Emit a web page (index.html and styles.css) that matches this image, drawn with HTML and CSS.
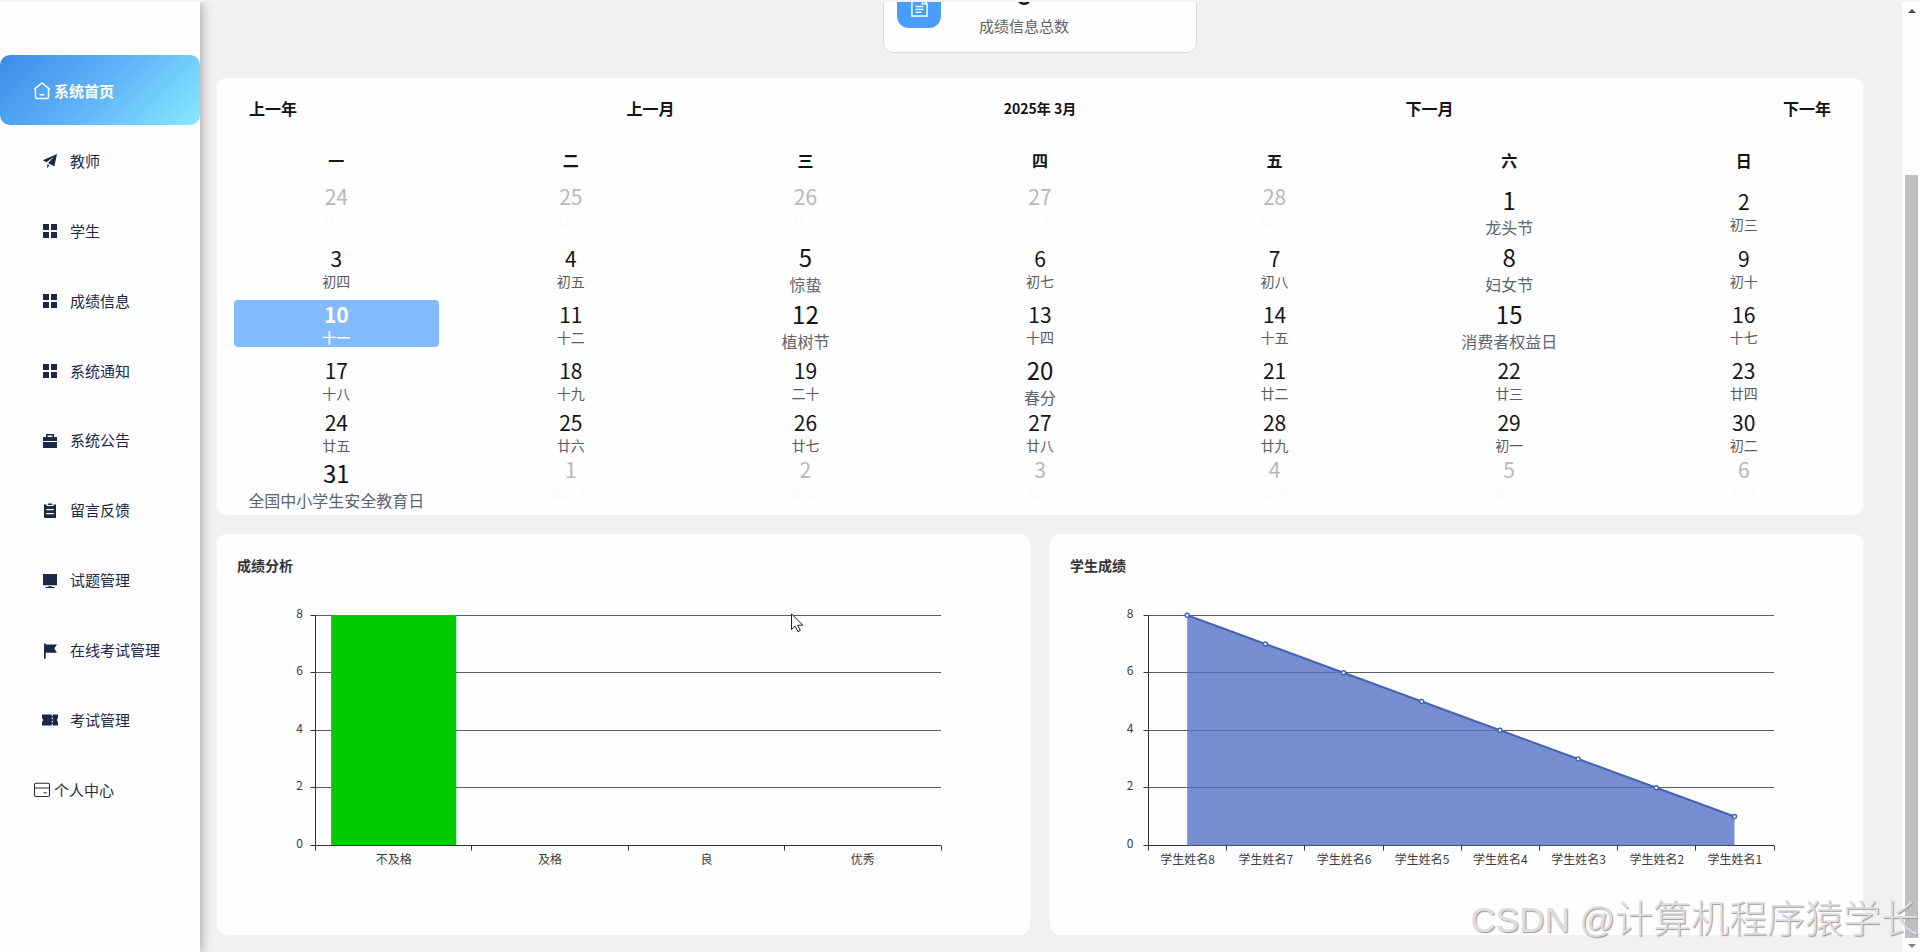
FILE: index.html
```html
<!DOCTYPE html>
<html lang="zh-CN">
<head>
  <meta charset="UTF-8" />
  <meta name="viewport" content="width=device-width, initial-scale=1.0" />
  <title>系统首页</title>
  <link rel="stylesheet" href="styles.css">
</head>
<body>
  <aside class="sidebar">
    <a class="item root active">
      <svg class="icon" viewBox="0 0 17 18"><path d="M.6 7.3 8.500 1 16.400 7.300M2 6.200V15.300q0 1.200 1.200 1.200H13.800q1.200 0 1.200-1.200V6.200M6 12.300q2.500 1.200 5 0" fill="none" stroke="currentColor" stroke-width="1.500"/></svg>
      <span>系统首页</span>
    </a>
    <a class="item">
      <svg class="icon" viewBox="0 0 16 16"><path d="M15 1 .8 7.2 4.5 9.2 12 3.6 6 10.2 12.4 13.2ZM5.2 11.2V15.2L7.6 12.3Z"/></svg>
      <span>教师</span>
    </a>
    <a class="item">
      <svg class="icon" viewBox="0 0 16 16"><path d="M1 1h6v6H1zM9 1h6v6H9zM1 9h6v6H1zM9 9h6v6H9z"/></svg>
      <span>学生</span>
    </a>
    <a class="item">
      <svg class="icon" viewBox="0 0 16 16"><path d="M1 1h6v6H1zM9 1h6v6H9zM1 9h6v6H1zM9 9h6v6H9z"/></svg>
      <span>成绩信息</span>
    </a>
    <a class="item">
      <svg class="icon" viewBox="0 0 16 16"><path d="M1 1h6v6H1zM9 1h6v6H9zM1 9h6v6H1zM9 9h6v6H9z"/></svg>
      <span>系统通知</span>
    </a>
    <a class="item">
      <svg class="icon" viewBox="0 0 16 16"><path d="M4 4V1h8v3h3v4H1V4zM5.6 4h4.8V2.4H5.6zM1 9h14v6H1z" fill-rule="evenodd"/></svg>
      <span>系统公告</span>
    </a>
    <a class="item">
      <svg class="icon" viewBox="0 0 16 16"><path d="M2 1.5h2.5V3h7V1.5H14V15H2zM5.8.5h4.4V2H5.8zM4.2 6v1.3h7.6V6zM4.2 10v1.3h7.6V10z" fill-rule="evenodd"/></svg>
      <span>留言反馈</span>
    </a>
    <a class="item">
      <svg class="icon" viewBox="0 0 16 16"><path d="M1 1h14v11.200H1zM6.500 13.200h3l.5.8h2.500v1h-9v-1H6z"/></svg>
      <span>试题管理</span>
    </a>
    <a class="item">
      <svg class="icon" viewBox="0 0 16 16"><path d="M2 .5h1.7V1.5H15L12.3 5.5 15 9.8H3.7V15.8H2z"/></svg>
      <span>在线考试管理</span>
    </a>
    <a class="item">
      <svg class="icon" viewBox="0 0 16 16"><path d="M0 2.5h9.8v1.4h1V2.5H16V6q-2 2 0 4v3.500h-5.200v-1.400h-1v1.400H0V10q2-2 0-4zM9.800 5.500v1.800h1V5.500zM9.800 8.800v1.800h1V8.800z" fill-rule="evenodd"/></svg>
      <span>考试管理</span>
    </a>
    <a class="item root">
      <svg class="icon" viewBox="0 0 17 18"><path d="M2.600 2.300h11.800q1.600 0 1.600 1.600v10q0 1.600-1.600 1.600H2.600Q1 15.500 1 13.900v-10Q1 2.300 2.600 2.300ZM1 7h15M10 11.700h3.300" fill="none" stroke="currentColor" stroke-width="1.100"/></svg>
      <span>个人中心</span>
    </a>
  </aside>

  <main class="main">
    <section class="stat">
      <div class="stat-icon">
        <svg viewBox="0 0 18 20"><path d="M1 1h11l5 5v13H1zM12 1v5h5M5 9h8M5 12h8M5 15h6" fill="none" stroke="#fff" stroke-width="1.500"/></svg>
      </div>
      <div class="stat-info">
        <div class="stat-num">8</div>
        <div class="stat-name">成绩信息总数</div>
      </div>
    </section>

    <section class="card calendar">
      <div class="cal-head">
        <span>上一年</span>
        <span>上一月</span>
        <span class="cal-title">2025年 3月</span>
        <span>下一月</span>
        <span>下一年</span>
      </div>
      <div class="cal-week">
        <span>一</span><span>二</span><span>三</span><span>四</span><span>五</span><span>六</span><span>日</span>
      </div>
      <div class="cal-days" id="days"></div>
    </section>

    <div class="charts">
      <section class="card chart">
        <h3>成绩分析</h3>
        <svg id="bar" width="813" height="360"></svg>
      </section>
      <section class="card chart">
        <h3>学生成绩</h3>
        <svg id="line" width="813" height="360"></svg>
      </section>
    </div>
  </main>

  <div class="scrollbar">
    <i class="arrow up"></i>
    <div class="thumb"></div>
    <i class="arrow down"></i>
  </div>

  <div class="watermark"><span>CSDN @</span>计算机程序猿学长</div>
  <svg class="cursor" viewBox="0 0 13 20"><path d="M.5.8V16.500L4.200 13.200 7 18.700 9.300 17.600 6.700 12.200H11.800Z" fill="#fff" stroke="#222"/></svg>

  <script>
    // 日期，农历/节日，类型：o 非本月，f 节日，t 今天
    const days = [
      [24, "廿七", "o"], [25, "廿八", "o"], [26, "廿九", "o"], [27, "三十", "o"], [28, "初一", "o"], [1, "龙头节", "f"], [2, "初三"],
      [3, "初四"], [4, "初五"], [5, "惊蛰", "f"], [6, "初七"], [7, "初八"], [8, "妇女节", "f"], [9, "初十"],
      [10, "十一", "t"], [11, "十二"], [12, "植树节", "f"], [13, "十四"], [14, "十五"], [15, "消费者权益日", "f"], [16, "十七"],
      [17, "十八"], [18, "十九"], [19, "二十"], [20, "春分", "f"], [21, "廿二"], [22, "廿三"], [23, "廿四"],
      [24, "廿五"], [25, "廿六"], [26, "廿七"], [27, "廿八"], [28, "廿九"], [29, "初一"], [30, "初二"],
      [31, "全国中小学生安全教育日", "f"], [1, "愚人节", "o"], [2, "初五", "o"], [3, "初六", "o"], [4, "清明", "o"], [5, "初八", "o"], [6, "初九", "o"]
    ];
    const types = { o: "other", f: "festival", t: "today" };
    document.getElementById("days").innerHTML = days.map(([n, text, t]) =>
      `<div class="day ${types[t] || ""}"><b>${n}</b><span>${text}</span></div>`
    ).join("");

    // 坐标系
    const left = 98.5, right = 724, top0 = 41.5, bottom = 271.5;
    const yOf = v => bottom - (bottom - top0) * v / 8;

    function drawAxis(names, labelGap) {
      let s = "";
      for (let v = 0; v <= 8; v += 2) {
        const y = Math.ceil(yOf(v)) - 0.5;
        if (v > 0) s += `<path class="split" d="M${left} ${y}H${right}"/>`;
        s += `<path class="axis" d="M${left - 5} ${y}H${left}"/>`;
        s += `<text x="${left - labelGap}" y="${y + 2.5}" text-anchor="end">${v}</text>`;
      }
      const step = (right - left) / names.length;
      for (let i = 0; i <= names.length; i++) {
        const x = Math.floor(left + step * i) + 0.5;
        s += `<path class="axis" d="M${x} ${bottom}V${bottom + 5}"/>`;
        if (i < names.length) s += `<text x="${left + step * (i + 0.5)}" y="${bottom + 18.5}" text-anchor="middle">${names[i]}</text>`;
      }
      return { s, step, frame: `<path class="axis" d="M${left} ${top0}V${bottom}H${right}"/>` };
    }

    const bar = drawAxis(["不及格", "及格", "良", "优秀"], 12.5);
    document.getElementById("bar").innerHTML = bar.s +
      `<rect x="${left + bar.step * 0.1}" y="${yOf(8) - 0.5}" width="${bar.step * 0.8}" height="${bottom - top0}" fill="#00cb00"/>` + bar.frame;

    const scores = [8, 7, 6, 5, 4, 3, 2, 1];
    const line = drawAxis(scores.map(v => "学生姓名" + v), 15);
    const pts = scores.map((v, i) => [left + line.step * (i + 0.5) - 0.4, yOf(v) - 0.3]);
    document.getElementById("line").innerHTML = line.s + line.frame +
      `<polygon class="area" points="${pts[0][0]},${bottom} ${pts.join(" ")} ${pts[7][0]},${bottom}"/>` +
      `<polyline class="trend" points="${pts.join(" ")}"/>` +
      pts.map(p => `<circle class="dot" cx="${p[0]}" cy="${p[1]}" r="2"/>`).join("");
  </script>
</body>
</html>
```
FILE: styles.css
```css
* {
  box-sizing: border-box;
}

body {
  margin: 0;
  height: 952px;
  display: flex;
  overflow: hidden;
  background: #f1f0f2;
  border-top: 2px solid #f3f2f4;
  font-family: "Noto Sans CJK SC", sans-serif;
  color: #141414;
}

.sidebar {
  width: 200px;
  flex-shrink: 0;
  padding-top: 53px;
  background: #fefdff;
  box-shadow: 0 0 12px rgba(0, 0, 0, 0.4);
}

.item {
  display: flex;
  align-items: center;
  height: 69.9px;
  padding: 3px 0 0 42px;
  gap: 12px;
  font-size: 15px;
  color: #1d2748;
}

.item span {
  margin-top: -2px;
}

.item .icon {
  width: 16px;
  height: 16px;
  fill: currentColor;
}

.item.root {
  padding-left: 33px;
  gap: 3px;
  color: #2c2f3a;
}

.item.root .icon {
  width: 18px;
  height: 18px;
}

.item.active,
.item.root.active {
  color: #fff;
  font-weight: bold;
  border-radius: 10px;
  background: linear-gradient(135deg, #3a8bea, #5fb4f8 50%, #8ae9ff);
}

.main {
  width: 1646px;
  margin-left: 17px;
  display: flex;
  flex-direction: column;
}

.card {
  background: #fefdff;
  border-radius: 10px;
}

.stat {
  width: 314px;
  height: 100px;
  flex-shrink: 0;
  margin: -49px auto 25px;
  display: flex;
  align-items: center;
  padding: 0 13px;
  background: #fefdff;
  border: 1px solid #dcdbde;
  border-radius: 10px;
}

.stat-icon {
  width: 44px;
  height: 44px;
  margin-top: 6px;
  display: flex;
  align-items: center;
  justify-content: center;
  background: #4a9dfb;
  border-radius: 12px;
}

.stat-icon svg {
  width: 17px;
  height: 19px;
  margin-top: 2px;
}

.stat-info {
  margin-left: 38px;
  padding-top: 9px;
  text-align: center;
}

.stat-num {
  font-size: 24px;
  font-weight: bold;
  line-height: 32px;
  margin-bottom: 4px;
}

.stat-name {
  font-size: 15px;
  line-height: 22px;
  color: #606266;
}

.calendar {
  height: 437px;
  flex-shrink: 0;
  padding: 0 2px;
  overflow: hidden;
}

.cal-head {
  height: 61px;
  padding: 0 30px 2px;
  display: flex;
  justify-content: space-between;
  align-items: center;
  font-weight: bold;
}

.cal-title {
  font-size: 14px;
}

.cal-week {
  height: 42px;
  display: grid;
  grid-template-columns: repeat(7, 1fr);
  text-align: center;
  line-height: 43px;
  font-weight: bold;
}

.cal-days {
  display: grid;
  grid-template-columns: repeat(7, 1fr);
  grid-template-rows: 57px 56.5px 56px 56px 47.5px 60px;
}

.day {
  align-self: center;
  height: 47px;
  margin: 0 15px;
  display: flex;
  flex-direction: column;
  align-items: center;
  border-radius: 4px;
  white-space: nowrap;
}

.day b {
  font-size: 21px;
  font-weight: normal;
  line-height: 30px;
}

.day span {
  font-size: 14px;
  line-height: 17px;
  color: #5b5b5e;
}

.day.other {
  align-self: start;
}

.day.other b {
  color: #b8b7ba;
}

.day.other span {
  color: #fbfafc;
}

.day.festival {
  align-self: start;
  margin-top: 3px;
}

.day.festival b {
  font-size: 24px;
  line-height: 32px;
}

.day.festival span {
  font-size: 16px;
  line-height: 23px;
  color: #5c6470;
}

.day.today {
  position: relative;
  background: #83bafe;
  height: 47px;
  margin-top: 1px;
}

.day.today b,
.day.today span {
  margin-top: -1px;
  color: #fff;
  font-weight: bold;
}

.day.today span {
  margin-top: 0;
  font-weight: 500;
}

.charts {
  display: flex;
  gap: 20px;
  margin-top: 19px;
}

.chart {
  width: 813px;
  height: 401px;
}

.chart h3 {
  margin: 0 0 -1px;
  padding: 21px 20px 0;
  font-size: 14px;
  line-height: 20px;
  color: #333;
}

.chart svg {
  display: block;
}

.chart text {
  font-size: 12px;
  fill: #3c3c40;
}

.split {
  stroke: #5d5c62;
}

.axis {
  fill: none;
  stroke: #333238;
}

.area {
  fill: #5470c6;
  opacity: 0.8;
}

.trend {
  fill: none;
  stroke: #4563b5;
  stroke-width: 2;
}

.dot {
  fill: #fff;
  stroke: #4563b5;
  stroke-width: 1.5;
}

.scrollbar {
  width: 18px;
  margin-left: auto;
  padding: 7px 2px 4px 3px;
  display: flex;
  flex-direction: column;
  align-items: center;
  background: #fefdff;
}

.thumb {
  width: 13px;
  height: 763px;
  margin-top: auto;
  background: #bfbec0;
}

.arrow {
  border: 4px solid transparent;
}

.arrow.up {
  border-top: 0;
  border-bottom-color: #4a494d;
}

.arrow.down {
  margin-top: 6px;
  border-bottom: 0;
  border-top-color: #858487;
}

.watermark {
  position: absolute;
  right: 1px;
  bottom: 8px;
  font-family: "Liberation Sans", "Noto Sans CJK SC", sans-serif;
  font-size: 38px;
  font-weight: 300;
  line-height: 48px;
  white-space: nowrap;
  color: #dedee0;
  text-shadow: 1px 1px 1px #98979a;
}

.watermark span {
  font-size: 35px;
}

.cursor {
  position: absolute;
  left: 791px;
  top: 613px;
  width: 13px;
  height: 20px;
}
```
